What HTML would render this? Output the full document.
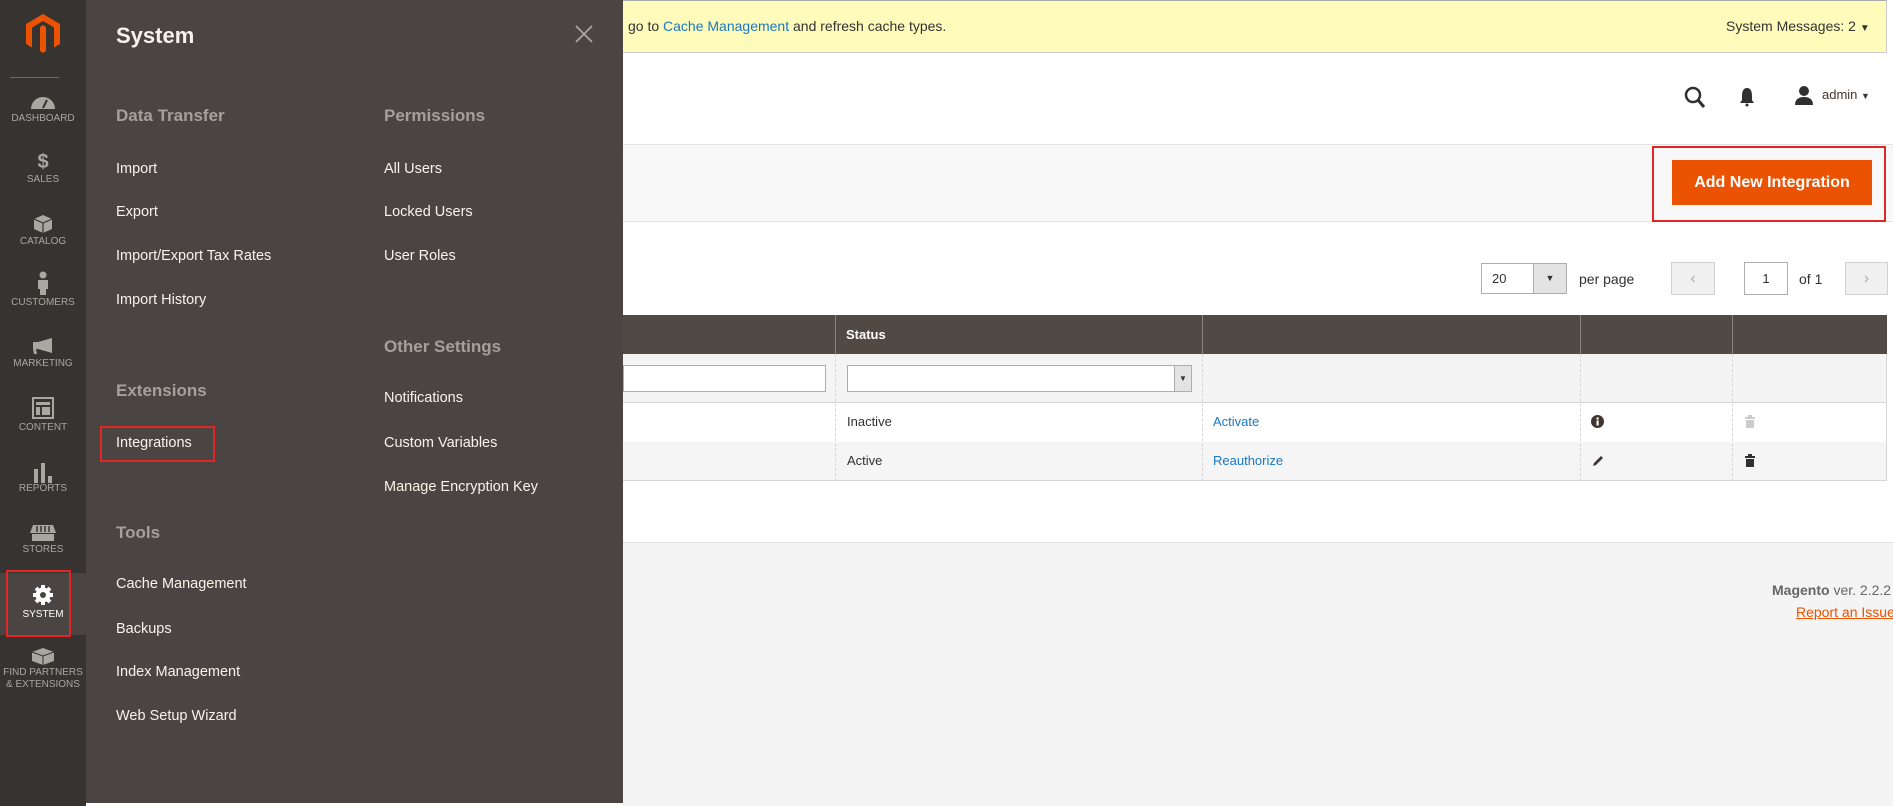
<!DOCTYPE html>
<html><head><meta charset="utf-8"><style>
*{box-sizing:border-box;margin:0;padding:0}
body{width:1893px;height:806px;overflow:hidden;background:#fff;font-family:"Liberation Sans",sans-serif;position:relative;color:#303030}
.a{position:absolute}
.side{left:0;top:0;width:86px;height:806px;background:#373330}
.nav{position:absolute;left:0;width:86px;text-align:center;color:#aaa6a0;font-size:10px;letter-spacing:0}
.nav svg{display:block;margin:0 auto}
.panel{left:86px;top:0;width:537px;height:803px;background:#4a4542}
.h{position:absolute;color:#a6a09b;font-size:17px;font-weight:bold}
.i{position:absolute;color:#f7f3eb;font-size:14.5px}
.t{font-size:13px}
</style></head><body>
<div class="a" style="left:623px;top:0;width:1264px;height:53px;background:#fffbbb;border-top:1px solid #aaa;border-bottom:1px solid #ccc;border-right:1px solid #ccc"></div>
<div class="a" style="left:628px;top:18px;font-size:14px;color:#333">go to <span style="color:#1979c3">Cache Management</span> and refresh cache types.</div>
<div class="a" style="left:1726px;top:18px;font-size:14px;color:#333">System Messages: 2 <span style="font-size:10px">▼</span></div>
<svg class="a" style="left:1684px;top:86px" width="22" height="24" viewBox="0 0 22 24"><circle cx="9" cy="9" r="7" fill="none" stroke="#303030" stroke-width="2.5"/><path d="M14 14l6 7" stroke="#303030" stroke-width="3"/></svg>
<svg class="a" style="left:1739px;top:87px" width="16" height="20" viewBox="0 0 16 20"><path d="M8 1c-4 0-5 4-5 8v4l-2 3h14l-2-3V9c0-4-1-8-5-8z" fill="#303030"/><circle cx="8" cy="18" r="1.5" fill="#303030"/></svg>
<svg class="a" style="left:1794px;top:85px" width="20" height="20" viewBox="0 0 20 20"><circle cx="10" cy="6" r="5" fill="#303030"/><path d="M1 20c0-6 4-8 9-8s9 2 9 8z" fill="#303030"/></svg>
<div class="a" style="left:1822px;top:87px;font-size:13px;color:#41362f">admin <span style="font-size:9px">▼</span></div>
<div class="a" style="left:623px;top:144px;width:1270px;height:78px;background:#f8f8f8;border-top:1px solid #e3e3e3;border-bottom:1px solid #e3e3e3"></div>
<div class="a" style="left:1672px;top:160px;width:200px;height:45px;background:#eb5202;color:#fff;font-weight:bold;font-size:16px;text-align:center;line-height:45px">Add New Integration</div>
<div class="a" style="left:1652px;top:146px;width:234px;height:76px;border:2px solid #e22626"></div>
<div class="a" style="left:1481px;top:263px;width:86px;height:31px;border:1px solid #adadad;background:#fff;font-size:13px;line-height:29px;padding-left:10px">20</div>
<div class="a" style="left:1533px;top:264px;width:33px;height:29px;background:#e3e3e3;border-left:1px solid #adadad;text-align:center;font-size:9px;line-height:29px">▼</div>
<div class="a" style="left:1579px;top:271px;font-size:14px;color:#303030">per page</div>
<div class="a" style="left:1671px;top:262px;width:44px;height:33px;border:1px solid #d1d1d1;background:#f0f0f0;color:#aaa;text-align:center;line-height:31px;font-size:16px">‹</div>
<div class="a" style="left:1744px;top:262px;width:44px;height:33px;border:1px solid #adadad;background:#fff;text-align:center;line-height:31px;font-size:13px">1</div>
<div class="a" style="left:1799px;top:271px;font-size:14px">of 1</div>
<div class="a" style="left:1845px;top:262px;width:43px;height:33px;border:1px solid #d1d1d1;background:#f0f0f0;color:#aaa;text-align:center;line-height:31px;font-size:16px">›</div>
<div class="a" style="left:623px;top:315px;width:1264px;height:39px;background:#514943"></div>
<div class="a t" style="left:846px;top:327px;color:#fff;font-weight:bold">Status</div>
<div class="a" style="left:835px;top:315px;width:1px;height:39px;background:#8a837f"></div>
<div class="a" style="left:1202px;top:315px;width:1px;height:39px;background:#8a837f"></div>
<div class="a" style="left:1580px;top:315px;width:1px;height:39px;background:#8a837f"></div>
<div class="a" style="left:1732px;top:315px;width:1px;height:39px;background:#8a837f"></div>
<div class="a" style="left:623px;top:354px;width:1264px;height:49px;background:#f4f4f4;border-bottom:1px solid #d6d6d6"></div>
<div class="a" style="left:623px;top:365px;width:203px;height:27px;background:#fff;border:1px solid #adadad"></div>
<div class="a" style="left:847px;top:365px;width:345px;height:27px;background:#fff;border:1px solid #adadad"></div>
<div class="a" style="left:1174px;top:366px;width:17px;height:25px;background:#e3e3e3;border-left:1px solid #adadad;font-size:8px;text-align:center;line-height:25px">▼</div>
<div class="a" style="left:623px;top:403px;width:1264px;height:39px;background:#fff"></div>
<div class="a" style="left:623px;top:442px;width:1264px;height:39px;background:#f5f5f5;border-bottom:1px solid #d6d6d6"></div>
<div class="a" style="left:1886px;top:354px;width:1px;height:127px;background:#d6d6d6"></div>
<div class="a" style="left:835px;top:354px;height:127px;border-left:1px dashed #d6d6d6"></div>
<div class="a" style="left:1202px;top:354px;height:127px;border-left:1px dashed #d6d6d6"></div>
<div class="a" style="left:1580px;top:354px;height:127px;border-left:1px dashed #d6d6d6"></div>
<div class="a" style="left:1732px;top:354px;height:127px;border-left:1px dashed #d6d6d6"></div>
<div class="a t" style="left:847px;top:414px">Inactive</div>
<div class="a t" style="left:1213px;top:414px;color:#1979c3">Activate</div>
<div class="a t" style="left:847px;top:453px">Active</div>
<div class="a t" style="left:1213px;top:453px;color:#1979c3">Reauthorize</div>
<svg class="a" style="left:1591px;top:415px" width="13" height="13"><circle cx="6.5" cy="6.5" r="6.5" fill="#41362f"/><rect x="5.5" y="5.5" width="2.2" height="5" fill="#fff"/><circle cx="6.6" cy="3.5" r="1.2" fill="#fff"/></svg>
<svg class="a" style="left:1592px;top:455px" width="12" height="12"><path d="M1 11l1-3 7-7 2 2-7 7z" fill="#41362f"/></svg>
<svg class="a" style="left:1745px;top:415px" width="10" height="13"><rect x="3" y="0" width="4" height="2" fill="#ccc"/><rect x="0" y="2" width="10" height="2" fill="#ccc"/><rect x="1" y="5" width="8" height="8" fill="#ccc"/></svg>
<svg class="a" style="left:1745px;top:454px" width="10" height="13"><rect x="3" y="0" width="4" height="2" fill="#303030"/><rect x="0" y="2" width="10" height="2" fill="#303030"/><rect x="1" y="5" width="8" height="8" fill="#303030"/></svg>
<div class="a" style="left:623px;top:542px;width:1270px;height:264px;background:#f4f4f4;border-top:1px solid #e0e0e0"></div>
<div class="a" style="left:1772px;top:582px;font-size:14px;color:#666;white-space:nowrap"><b>Magento</b> ver. 2.2.2</div>
<div class="a" style="left:1796px;top:604px;font-size:14px;color:#eb5202;text-decoration:underline;white-space:nowrap">Report an Issue</div>
<div class="a side"></div>
<svg class="a" style="left:26px;top:14px" width="34" height="40" viewBox="0 0 34 40"><path d="M17 0L34 10V30L28 33.5V13.5L17 7L6 13.5V33.5L0 30V10Z" fill="#eb5202"/><path d="M14 13L17 11L20 13V37L17 39L14 37Z" fill="#eb5202"/></svg>
<div class="a" style="left:10px;top:77px;width:49px;height:1px;background:#736963"></div>
<div class="nav" style="top:94px"><svg width="26" height="16"><path d="M1 15a12 12 0 0 1 24 0z" fill="#aaa6a0"/><path d="M13 14l4-8" stroke="#373330" stroke-width="2"/></svg><div style="margin-top:3px">DASHBOARD</div></div>
<div class="nav" style="top:152px"><div style="font-size:20px;font-weight:bold;line-height:20px">$</div><div style="margin-top:2px">SALES</div></div>
<div class="nav" style="top:214px"><svg width="20" height="20"><path d="M10 1l9 4v10l-9 4-9-4V5z" fill="#aaa6a0"/><path d="M1 5l9 4 9-4M10 9v10" stroke="#373330" stroke-width="1.2" fill="none"/></svg><div style="margin-top:2px">CATALOG</div></div>
<div class="nav" style="top:271px"><svg width="14" height="24"><circle cx="7" cy="4" r="3.5" fill="#aaa6a0"/><path d="M2 9h10v9h-2v6H4v-6H2z" fill="#aaa6a0"/></svg><div style="margin-top:2px">CUSTOMERS</div></div>
<div class="nav" style="top:337px"><svg width="24" height="18"><path d="M2 5h5l14-4v15L7 12H5l1 5H3l-1-5z" fill="#aaa6a0"/></svg><div style="margin-top:3px">MARKETING</div></div>
<div class="nav" style="top:397px"><svg width="22" height="22"><rect x="1" y="1" width="20" height="20" fill="none" stroke="#aaa6a0" stroke-width="2"/><rect x="4" y="5" width="14" height="3" fill="#aaa6a0"/><rect x="4" y="10" width="4" height="8" fill="#aaa6a0"/><rect x="10" y="10" width="8" height="8" fill="#aaa6a0"/></svg><div style="margin-top:3px">CONTENT</div></div>
<div class="nav" style="top:461px"><svg width="22" height="22"><rect x="2" y="8" width="4" height="14" fill="#aaa6a0"/><rect x="9" y="2" width="4" height="20" fill="#aaa6a0"/><rect x="16" y="15" width="4" height="7" fill="#aaa6a0"/></svg><div style="margin-top:0">REPORTS</div></div>
<div class="nav" style="top:524px"><svg width="26" height="18"><path d="M3 1h20l3 8H0z" fill="#aaa6a0"/><rect x="2" y="10" width="22" height="7" fill="#aaa6a0"/><path d="M7 2v6M11 2v6M15 2v6M19 2v6" stroke="#373330" stroke-width="1.5"/></svg><div style="margin-top:2px">STORES</div></div>
<div class="a" style="left:0;top:573px;width:86px;height:62px;background:#4a4542"></div>
<div class="nav" style="top:584px;color:#fff"><svg width="22" height="22" viewBox="0 0 22 22"><circle cx="11" cy="11" r="7.5" fill="#fff"/><g stroke="#fff" stroke-width="4"><path d="M11 1v20M1 11h20M4 4l14 14M18 4L4 18"/></g><circle cx="11" cy="11" r="3" fill="#4a4542"/></svg><div style="margin-top:3px">SYSTEM</div></div>
<div class="a" style="left:6px;top:570px;width:65px;height:67px;border:2px solid #e22626"></div>
<div class="nav" style="top:647px"><svg width="24" height="18"><path d="M12 1l11 4v9l-11 4-11-4V5z" fill="#aaa6a0"/><path d="M1 5l11 4 11-4M12 9v9" stroke="#373330" stroke-width="1" fill="none"/></svg><div style="margin-top:2px;line-height:12px">FIND PARTNERS<br>&amp; EXTENSIONS</div></div>
<div class="a panel"></div>
<div class="a" style="left:116px;top:23px;color:#f7f3eb;font-size:22px;font-weight:bold">System</div>
<svg class="a" style="left:575px;top:25px" width="18" height="18"><path d="M1 1l16 16M17 1L1 17" stroke="#aaa6a0" stroke-width="1.8"/></svg>
<div class="h" style="left:116px;top:106px">Data Transfer</div>
<div class="i" style="left:116px;top:161px">Import</div>
<div class="i" style="left:116px;top:204px">Export</div>
<div class="i" style="left:116px;top:248px">Import/Export Tax Rates</div>
<div class="i" style="left:116px;top:292px">Import History</div>
<div class="h" style="left:116px;top:381px">Extensions</div>
<div class="i" style="left:116px;top:435px">Integrations</div>
<div class="a" style="left:100px;top:426px;width:115px;height:36px;border:2px solid #e22626"></div>
<div class="h" style="left:116px;top:523px">Tools</div>
<div class="i" style="left:116px;top:576px">Cache Management</div>
<div class="i" style="left:116px;top:621px">Backups</div>
<div class="i" style="left:116px;top:664px">Index Management</div>
<div class="i" style="left:116px;top:708px">Web Setup Wizard</div>
<div class="h" style="left:384px;top:106px">Permissions</div>
<div class="i" style="left:384px;top:161px">All Users</div>
<div class="i" style="left:384px;top:204px">Locked Users</div>
<div class="i" style="left:384px;top:248px">User Roles</div>
<div class="h" style="left:384px;top:337px">Other Settings</div>
<div class="i" style="left:384px;top:390px">Notifications</div>
<div class="i" style="left:384px;top:435px">Custom Variables</div>
<div class="i" style="left:384px;top:479px">Manage Encryption Key</div>
</body></html>
